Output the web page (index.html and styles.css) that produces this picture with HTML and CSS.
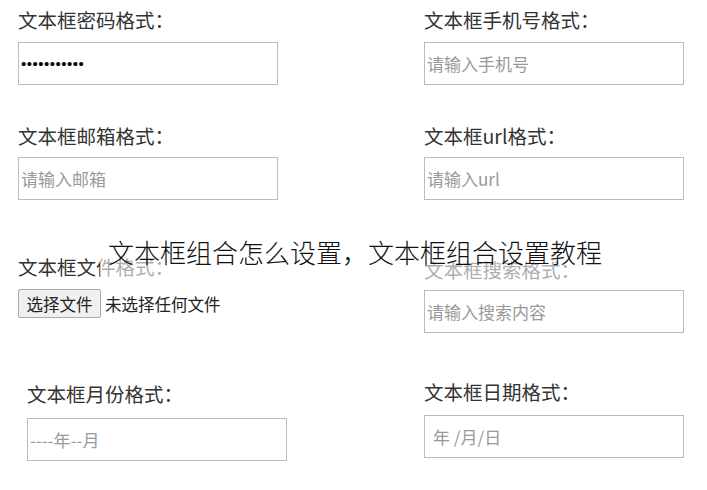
FILE: index.html
```html
<!DOCTYPE html>
<html lang="zh-CN">
<head>
    <meta charset="UTF-8">
    <meta name="viewport" content="width=device-width, initial-scale=1.0">
    <title>文本框组合怎么设置</title>
    <link rel="stylesheet" href="styles.css">
</head>
<body>

    <div class="page">
        <div class="column column-left">
            <div class="field">
                <label for="pwd">文本框密码格式：</label>
                <input type="password" id="pwd" value="abcdefghijk">
            </div>
            <div class="field field-2">
                <label for="email">文本框邮箱格式：</label>
                <input type="text" id="email" placeholder="请输入邮箱">
            </div>
            <div class="field field-3">
                <label>文本框文件格式：</label>
                <div class="file-row">
                    <button class="file-btn">选择文件</button>
                    <span class="file-name">未选择任何文件</span>
                </div>
            </div>
            <div class="field field-4 shifted">
                <label for="month">文本框月份格式：</label>
                <input type="text" id="month" placeholder="----年--月">
            </div>
        </div>

        <div class="column column-right">
            <div class="field">
                <label for="phone">文本框手机号格式：</label>
                <input type="text" id="phone" placeholder="请输入手机号">
            </div>
            <div class="field field-2">
                <label for="url">文本框url格式：</label>
                <input type="text" id="url" placeholder="请输入url">
            </div>
            <div class="field field-3r">
                <label for="search">文本框搜索格式：</label>
                <input type="text" id="search" placeholder="请输入搜索内容">
            </div>
            <div class="field field-4r">
                <label for="date">文本框日期格式：</label>
                <input type="text" id="date" class="date" placeholder="年 /月/日">
            </div>
        </div>
    </div>

    <div class="title-overlay">文本框组合怎么设置，文本框组合设置教程</div>

</body>
</html>
```

FILE: styles.css
```css
body {
    margin: 0;
    background-color: #fff;
    font-family: "Noto Sans CJK SC", "Microsoft YaHei", sans-serif;
    color: #333;
}

.page {
    display: flex;
    padding: 7px 0 0 18px;
}

.column {
    width: 260px;
}

.column-right {
    margin-left: 146px;
}

label {
    display: block;
    font-size: 19.5px;
    line-height: 26px;
    color: #333;
    margin-bottom: 9px;
}

input[type="text"], input[type="password"] {
    display: block;
    width: 100%;
    height: 43px;
    padding: 0 2px;
    border: 1px solid #bbb;
    box-sizing: border-box;
    font-family: "Noto Sans CJK SC", sans-serif;
    font-size: 17px;
    color: #000;
    outline: none;
}

input[type="password"] {
    font-family: "Liberation Sans", sans-serif;
    font-size: 15px;
    letter-spacing: 0.5px;
}

input::placeholder {
    color: #999;
}

.field-2 {
    margin-top: 38px;
}

.field-2 label {
    margin-bottom: 8px;
}

.field-3 {
    margin-top: 54px;
}

.field-4 {
    margin-top: 63px;
}

.field-4 label {
    margin-bottom: 11px;
}

.shifted {
    margin-left: 9px;
    width: 260px;
}

.field-3r {
    margin-top: 57px;
}

.field-3r label {
    margin-bottom: 7px;
}

.field-4r {
    margin-top: 46px;
}

.field-4r label {
    margin-bottom: 10px;
}

.date {
    padding-left: 8px !important;
}

.file-row {
    display: flex;
    align-items: center;
}

.file-btn {
    width: 83px;
    height: 29px;
    padding: 0;
    background-color: #f0f0f0;
    border: 1px solid #aaa;
    border-radius: 2px;
    font-family: "Noto Sans CJK SC", sans-serif;
    font-size: 16.5px;
    color: #222;
}

.file-name {
    margin-left: 4px;
    font-size: 16.5px;
    color: #222;
}

.title-overlay {
    position: absolute;
    top: 233px;
    left: 100px;
    width: 510px;
    height: 52px;
    padding: 1px 0 0 8px;
    box-sizing: border-box;
    background-color: rgba(255, 255, 255, 0.6);
    font-size: 26px;
    font-weight: 300;
    color: #111;
    line-height: 36px;
}
```
